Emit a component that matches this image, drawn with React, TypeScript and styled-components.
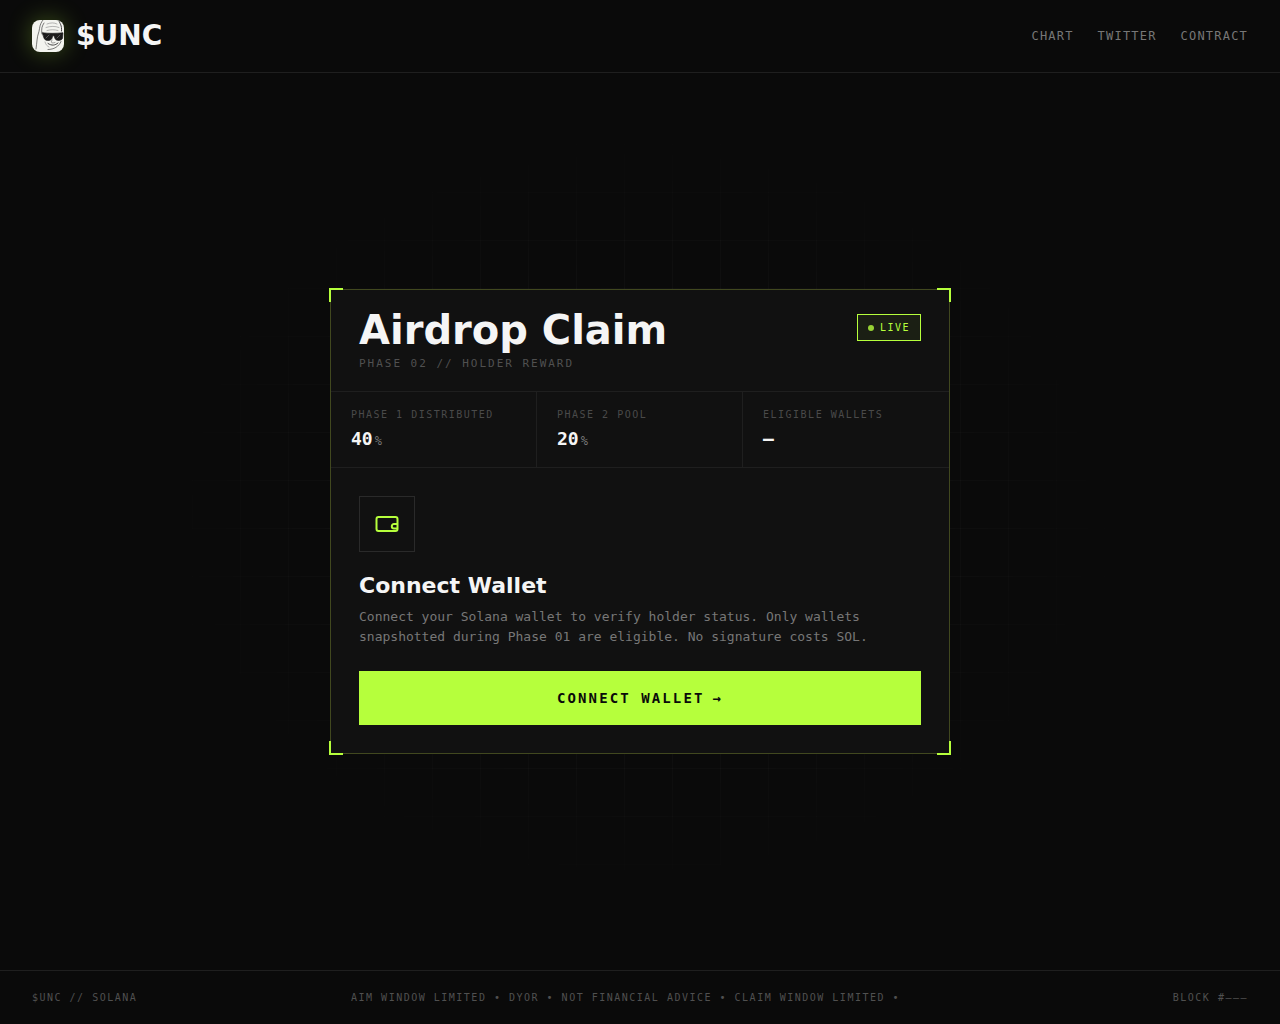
import React from "react";
import styled, { createGlobalStyle } from "styled-components";

const lime = "#b6ff3c";
const line = "#1f1f1f";
const mono = `"DejaVu Sans Mono", "Liberation Mono", monospace`;
const display = `"DejaVu Sans", "Open Sans", sans-serif`;

const GlobalStyle = createGlobalStyle`
  *, *::before, *::after { box-sizing: border-box; }
  body { margin: 0; background: #0a0a0a; color: #f5f5f5; font-family: ${mono}; }
  h1, h2, p, dl, dt, dd { margin: 0; }
`;

const Page = styled.div`
  position: relative;
  isolation: isolate;
  min-height: 100vh;
  display: flex;
  flex-direction: column;
  &::before {
    content: "";
    position: absolute;
    inset: 0;
    z-index: -1;
    background-image:
      linear-gradient(rgba(255, 255, 255, 0.06) 1px, transparent 1px),
      linear-gradient(90deg, rgba(255, 255, 255, 0.06) 1px, transparent 1px);
    background-size: 48px 48px;
    mask-image: radial-gradient(ellipse at center, #000 0%, transparent 55%);
  }
`;

const TopBar = styled.header`
  display: flex;
  align-items: center;
  justify-content: space-between;
  padding: 20px 32px;
  border-bottom: 1px solid ${line};
`;

const Brand = styled.a`
  display: flex;
  align-items: center;
  gap: 12px;
  color: #f5f5f5;
  text-decoration: none;
  font: 700 28px/32px ${display};
`;

const Avatar = styled.svg`
  width: 32px;
  height: 32px;
  border-radius: 8px;
  background: #f3f4ef;
  box-shadow: 0 0 24px rgba(182, 255, 60, 0.3);
`;

const Nav = styled.nav`
  display: flex;
  gap: 24px;
`;

const NavLink = styled.a`
  color: #777;
  text-decoration: none;
  font-size: 12px;
  line-height: 16px;
  letter-spacing: 0.1em;
`;

const Main = styled.main`
  flex: 1;
  display: grid;
  place-items: center;
  padding: 32px 24px;
`;

const Card = styled.section`
  position: relative;
  width: 100%;
  max-width: 620px;
  background: #111;
  border: 1px solid #41481f;
`;

const Corner = styled.span<{ $v: "top" | "bottom"; $h: "left" | "right" }>`
  position: absolute;
  ${(p) => p.$v}: -2px;
  ${(p) => p.$h}: -2px;
  width: 14px;
  height: 14px;
  border: 0 solid ${lime};
  border-${(p) => p.$v}-width: 2px;
  border-${(p) => p.$h}-width: 2px;
`;

const CardHead = styled.div`
  display: flex;
  align-items: flex-start;
  justify-content: space-between;
  gap: 16px;
  padding: 24px 28px 20px;
  border-bottom: 1px solid ${line};
`;

const Title = styled.h1`
  font: 700 40px/32px ${display};
`;

const Phase = styled.p`
  margin-top: 10px;
  color: #505050;
  font-size: 11px;
  line-height: 15px;
  letter-spacing: 0.18em;
`;

const Badge = styled.span`
  display: inline-flex;
  flex: none;
  align-items: center;
  gap: 6px;
  padding: 6px 10px;
  border: 1px solid ${lime};
  background: rgba(182, 255, 60, 0.06);
  color: ${lime};
  font-size: 10px;
  line-height: 13px;
  letter-spacing: 0.15em;
`;

const Dot = styled.i`
  width: 6px;
  height: 6px;
  border-radius: 50%;
  background: ${lime};
  opacity: 0.8;
`;

const Stats = styled.dl`
  display: grid;
  grid-template-columns: repeat(3, 1fr);
  border-bottom: 1px solid ${line};
`;

const Stat = styled.div`
  padding: 16px 20px;
  border-right: 1px solid ${line};
  &:last-child { border-right: 0; }
`;

const StatLabel = styled.dt`
  color: #4a4a4a;
  font-size: 10px;
  line-height: 13px;
  letter-spacing: 0.15em;
  white-space: nowrap;
`;

const StatValue = styled.dd`
  display: flex;
  align-items: baseline;
  gap: 2px;
  height: 24px;
  margin-top: 6px;
  font-size: 18px;
  line-height: 24px;
  font-weight: 700;
`;

const Unit = styled.span`
  color: #777;
  font-size: 12px;
  font-weight: 400;
`;

const Body = styled.div`
  padding: 28px;
`;

const IconBox = styled.div`
  display: grid;
  place-items: center;
  width: 56px;
  height: 56px;
  border: 1px solid #2a2a2a;
`;

const Heading = styled.h2`
  margin-top: 20px;
  font: 700 22px/27px ${display};
`;

const Copy = styled.p`
  margin: 8px 0 24px;
  color: #777;
  font-size: 13px;
  line-height: 20px;
`;

const ConnectButton = styled.button`
  display: flex;
  align-items: center;
  justify-content: center;
  gap: 8px;
  width: 100%;
  padding: 18px;
  border: 0;
  background: ${lime};
  color: #0a0a0a;
  font: 700 14px/18px ${mono};
  letter-spacing: 0.15em;
  cursor: pointer;
`;

const Footer = styled.footer`
  display: flex;
  align-items: center;
  justify-content: space-between;
  gap: 24px;
  padding: 20px 32px;
  border-top: 1px solid ${line};
  color: #505050;
  font-size: 10px;
  line-height: 13px;
  letter-spacing: 0.15em;
  white-space: nowrap;
`;

const Ticker = styled.div`
  flex: 0 1 608px;
  min-width: 0;
  overflow: hidden;
`;

const stats = [
  { label: "PHASE 1 DISTRIBUTED", value: "40", unit: "%" },
  { label: "PHASE 2 POOL", value: "20", unit: "%" },
  { label: "ELIGIBLE WALLETS", value: "—", unit: "" },
];

const Logo = () => (
  <Avatar viewBox="0 0 32 32" fill="none" stroke="#444" strokeWidth="0.7" strokeLinecap="round" aria-hidden="true">
    <path d="M11 0C7 5 8 9 6.500 13S5 22 4 29" />
    <path d="M12 3c-2 3-3 6-2 11" />
    <path d="M15 4c4-1.500 7-1.500 10 0M14 7.500c5-1.500 9-1.500 13 0M15 10.500c4-1 7-1 11 0" stroke="#888" strokeWidth="0.600" />
    <path d="M27 1c1 3 3 4 2.500 10" strokeWidth="1" />
    <path d="M20 20c-1 2-1 3 1 3l2-.5" stroke="#777" />
    <path d="M16 23.500c4 2.500 7 2 10-.5" strokeWidth="1" />
    <path d="M16 29.500c6 0 11-3 13-8" />
    <path d="M13 22c1 3 2 4 4 5" stroke="#999" />
    <path d="M10.500 12.800c6 .8 14 .6 20.500 0l-.5 5.500c-.7 2.500-6.500 3-7.500.2l-1-2.800h-1.200l-1 3c-1.500 2.600-7 2.300-7.800-.5z" fill="#1c1c1c" stroke="#1c1c1c" />
    <path d="M14 18l3-3M25 18l3-3" stroke="#666" strokeWidth="0.800" />
  </Avatar>
);

const WalletIcon = () => (
  <svg width="26" height="26" viewBox="0 0 26 26" fill="none" stroke={lime} strokeWidth="2" aria-hidden="true">
    <rect x="2.500" y="6" width="21" height="14" rx="2" />
    <path d="M23.500 13h-3.500a2.200 2.200 0 0 0 0 4.400h3.500" />
  </svg>
);

export default function App() {
  return (
    <Page>
      <GlobalStyle />
      <TopBar>
        <Brand href="#">
          <Logo />
          $UNC
        </Brand>
        <Nav>
          <NavLink href="#chart">CHART</NavLink>
          <NavLink href="#twitter">TWITTER</NavLink>
          <NavLink href="#contract">CONTRACT</NavLink>
        </Nav>
      </TopBar>
      <Main>
        <Card>
          <Corner $v="top" $h="left" />
          <Corner $v="top" $h="right" />
          <Corner $v="bottom" $h="left" />
          <Corner $v="bottom" $h="right" />
          <CardHead>
            <div>
              <Title>Airdrop Claim</Title>
              <Phase>PHASE 02 // HOLDER REWARD</Phase>
            </div>
            <Badge>
              <Dot />
              LIVE
            </Badge>
          </CardHead>
          <Stats>
            {stats.map((s) => (
              <Stat key={s.label}>
                <StatLabel>{s.label}</StatLabel>
                <StatValue>
                  {s.value}
                  {s.unit && <Unit>{s.unit}</Unit>}
                </StatValue>
              </Stat>
            ))}
          </Stats>
          <Body>
            <IconBox>
              <WalletIcon />
            </IconBox>
            <Heading>Connect Wallet</Heading>
            <Copy>
              Connect your Solana wallet to verify holder status. Only wallets snapshotted during Phase 01 are
              eligible. No signature costs SOL.
            </Copy>
            <ConnectButton type="button">
              <span>CONNECT WALLET</span>
              <span>→</span>
            </ConnectButton>
          </Body>
        </Card>
      </Main>
      <Footer>
        <span>$UNC // SOLANA</span>
        <Ticker>AIM WINDOW LIMITED • DYOR • NOT FINANCIAL ADVICE • CLAIM WINDOW LIMITED •</Ticker>
        <span>BLOCK #———</span>
      </Footer>
    </Page>
  );
}
